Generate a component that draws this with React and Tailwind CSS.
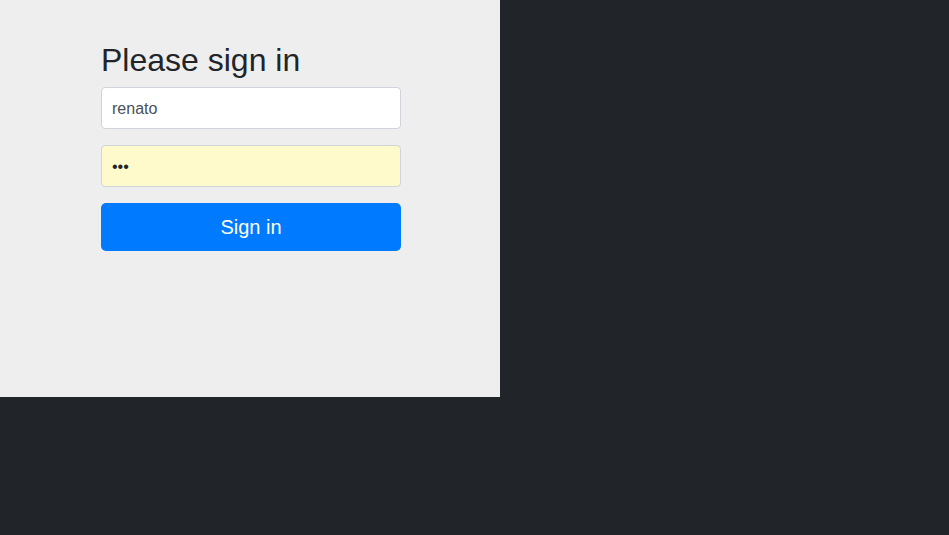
export default function App() {
  return (
    <div className="h-[535px] w-[949px] bg-[#212529] font-['Liberation_Sans',Arial,sans-serif]">
      <div className="h-[397px] w-[500px] bg-[#eeeeee] px-[101px] pt-[41px]">
        <form className="w-[300px]" onSubmit={(e) => e.preventDefault()}>
          <h1 className="m-0 mb-[8px] text-[32px] font-normal leading-[38px] text-[#212529]">Please sign in</h1>
          <input
            className="block h-[42px] w-full rounded-[4px] border border-[#ced4da] bg-white px-[10px] pt-[2px] text-[16px] text-[#495057] outline-none"
            defaultValue="renato"
            readOnly
          />
          <input
            type="password"
            className="mt-[16px] block h-[42px] w-full rounded-[4px] border border-[#ced4da] bg-[#fefacc] px-[10px] pt-[2px] text-[16px] text-[#212529] outline-none"
            defaultValue="abc"
            readOnly
          />
          <button
            type="submit"
            className="mt-[16px] block h-[48px] w-full rounded-[5px] bg-[#007bff] text-[20px] text-white"
          >
            Sign in
          </button>
        </form>
      </div>
    </div>
  )
}
